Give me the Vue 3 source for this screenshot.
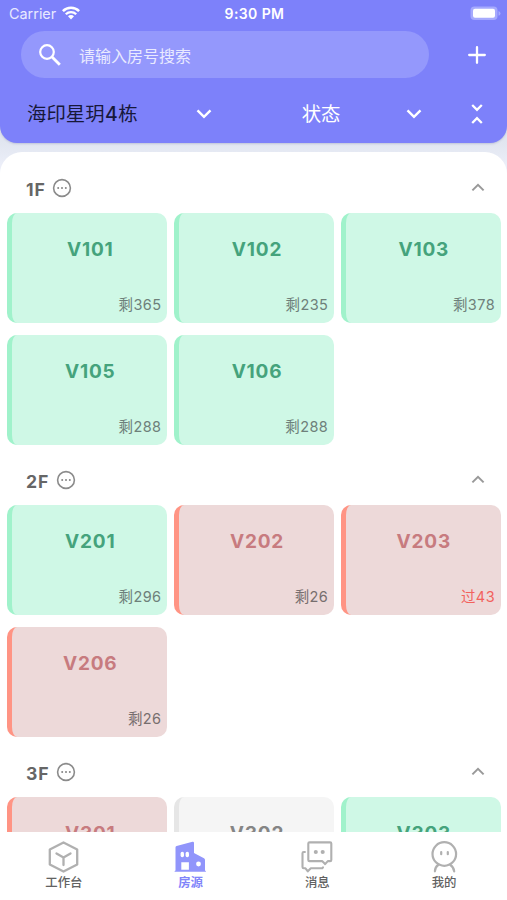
<script setup>
const floors = [
  {
    name: '1F',
    rooms: [
      { no: 'V101', tone: 'green', note: '剩365' },
      { no: 'V102', tone: 'green', note: '剩235' },
      { no: 'V103', tone: 'green', note: '剩378' },
      { no: 'V105', tone: 'green', note: '剩288' },
      { no: 'V106', tone: 'green', note: '剩288' },
    ],
  },
  {
    name: '2F',
    rooms: [
      { no: 'V201', tone: 'green', note: '剩296' },
      { no: 'V202', tone: 'red', note: '剩26' },
      { no: 'V203', tone: 'red', note: '过43', overdue: true },
      { no: 'V206', tone: 'red', note: '剩26' },
    ],
  },
  {
    name: '3F',
    rooms: [
      { no: 'V301', tone: 'red', note: '' },
      { no: 'V302', tone: 'gray', note: '' },
      { no: 'V303', tone: 'green', note: '' },
    ],
  },
]
</script>

<template>
  <div class="screen">
    <header class="top">
      <div class="status">
        <div class="carrier">
          <span>Carrier</span>
          <svg class="wifi" width="18" height="14" viewBox="0 0 18 14" fill="none" stroke="#fff">
            <path d="M.9 5.1a11.6 11.6 0 0 1 16.2 0" stroke-width="2.6" />
            <path d="M3.8 8.2a7.4 7.4 0 0 1 10.4 0" stroke-width="2.3" />
            <path d="M6 10.3a4.2 4.2 0 0 1 6 0L9 13.5z" fill="#fff" stroke="none" />
          </svg>
        </div>
        <div class="time">9:30 PM</div>
        <div class="power">
          <svg width="31" height="15" viewBox="0 0 31 15">
            <rect x=".5" y=".5" width="27" height="13.6" rx="4" fill="#a6aafd" />
            <rect x="3" y="2.8" width="22" height="9" rx="2" fill="#fff" />
            <path d="M28.5 5v4.8q2-.7 2-2.4t-2-2.4z" fill="#a6aafd" />
          </svg>
        </div>
      </div>
      <div class="search-row">
        <div class="search">
          <svg width="22" height="22" viewBox="0 0 22 22" fill="none" stroke="#fff">
            <circle cx="8" cy="8" r="6.8" stroke-width="2.2" />
            <path d="M12.8 12.8l8 8" stroke-width="2.8" />
          </svg>
          <span>请输入房号搜索</span>
        </div>
        <svg class="plus" width="18" height="18" viewBox="0 0 18 18" stroke="#fff" stroke-width="2.3" stroke-linecap="round">
          <path d="M9 1.2v15.6M1.2 9h15.6" />
        </svg>
      </div>
      <div class="filters">
        <span class="building">海印星玥<b>4</b>栋</span>
        <svg width="16" height="10" viewBox="0 0 16 10" fill="none" stroke="#fff" stroke-width="2.4">
          <path d="M1.5 1.3L8 7.8l6.5-6.5" />
        </svg>
        <span class="state">状态</span>
        <svg width="16" height="10" viewBox="0 0 16 10" fill="none" stroke="#fff" stroke-width="2.4">
          <path d="M1.5 1.3L8 7.8l6.5-6.5" />
        </svg>
        <svg class="fold" width="12" height="20" viewBox="0 0 12 20" fill="none" stroke="#fff" stroke-width="2.3">
          <path d="M1.2 1L6 5.8 10.8 1M1.2 19L6 14.2l4.8 4.8" />
        </svg>
      </div>
    </header>

    <main class="panel">
      <section v-for="floor in floors" :key="floor.name">
        <div class="floor-head">
          <span class="floor-name">{{ floor.name }}</span>
          <svg width="20" height="20" viewBox="0 0 20 20" fill="#858585">
            <circle cx="10" cy="10" r="8.4" fill="none" stroke="#8b8b8b" stroke-width="1.6" />
            <circle cx="6.2" cy="10" r="1" />
            <circle cx="10" cy="10" r="1" />
            <circle cx="13.8" cy="10" r="1" />
          </svg>
          <svg class="up" width="14" height="9" viewBox="0 0 14 9" fill="none" stroke="#999" stroke-width="2">
            <path d="M1.4 7.4L7 1.8l5.6 5.6" />
          </svg>
        </div>
        <div class="rooms">
          <div v-for="room in floor.rooms" :key="room.no" class="room" :class="room.tone">
            <span class="no">{{ room.no }}</span>
            <span class="note" :class="{ overdue: room.overdue }">{{ room.note }}</span>
          </div>
        </div>
      </section>
    </main>

    <nav class="tabs">
      <div class="tab">
        <svg width="34" height="34" viewBox="0 0 34 34" fill="none" stroke="#b0b0b0" stroke-width="2.3" stroke-linejoin="round" stroke-linecap="round">
          <path d="M17.5 2.4L31.2 9.6v14.8L17.5 31.6 3.8 24.4V9.6z" />
          <path d="M10.5 13.4l7 4.1 7-4.1M17.5 17.5v7.6" />
        </svg>
        <span>工作台</span>
      </div>
      <div class="tab active">
        <svg width="34" height="34" viewBox="0 0 34 34">
          <path fill="#9195fb" fill-rule="evenodd" d="M2.5 7.5q0-1.2 1.1-1.6L19.5 1.7q1.5-.3 1.5 1.2v10l10 5.4q1 .6 1 1.7v10.5q1 .2 1 1.2H1.5q0-1 1-1.2zM8.3 22.3v7.5h7.6v-7.5z" />
          <rect x="7.6" y="11.8" width="3.4" height="5.4" rx="1.6" fill="#fff" />
          <rect x="12.6" y="11.8" width="3.4" height="5.4" rx="1.6" fill="#fff" />
          <circle cx="25.5" cy="24" r="2.4" fill="#fff" />
        </svg>
        <span>房源</span>
      </div>
      <div class="tab">
        <svg width="34" height="34" viewBox="0 0 34 34" fill="none" stroke="#b0b0b0" stroke-width="2.1" stroke-linejoin="round" stroke-linecap="round">
          <path d="M9.5 2.4h20.6q1.2 0 1.2 1.2v16.3q0 1.2-1.2 1.2h-2.3l-2.7 3-3-3H9.5q-1.2 0-1.2-1.2V3.6q0-1.2 1.2-1.2z" />
          <path d="M4.9 12H3.7q-1.2 0-1.2 1.2v13.9q0 1.2 1.2 1.2h1.8l2.3 3 3-3h11.4l.8-1" />
          <circle cx="15.8" cy="12" r="1" fill="#b0b0b0" />
          <circle cx="22.7" cy="12" r="1" fill="#b0b0b0" />
        </svg>
        <span>消息</span>
      </div>
      <div class="tab">
        <svg width="34" height="34" viewBox="0 0 34 34" fill="none" stroke="#b0b0b0" stroke-width="2.2" stroke-linecap="round">
          <circle cx="17.3" cy="14" r="11.8" />
          <path d="M11.2 25q-3.2 2-3.3 6.3M23.4 25q3.2 2 3.8 6.3" />
          <path d="M14.2 12v2.2M20.8 12v2.2" />
        </svg>
        <span>我的</span>
      </div>
    </nav>
  </div>
</template>

<style>
body {
  margin: 0;
}
</style>

<style scoped>
.screen {
  width: 507px;
  height: 900px;
  overflow: hidden;
  display: flex;
  flex-direction: column;
  background: linear-gradient(#e1e6f0, #e1e6f0 142px, #eef0fa 170px);
  font-family: Inter, "Noto Sans CJK SC", sans-serif;
}
svg {
  display: block;
  flex: none;
}
.top {
  box-sizing: border-box;
  height: 143px;
  flex: none;
  background: #7d81fa;
  border-radius: 0 0 17px 17px;
  box-shadow: 0 1px 2px rgba(90, 100, 150, 0.25);
  color: #fff;
}
.status {
  display: grid;
  grid-template-columns: 1fr auto 1fr;
  align-items: center;
  height: 27px;
  padding: 0 6px 0 9px;
  font-size: 14.4px;
}
.carrier {
  display: flex;
  align-items: center;
  gap: 6px;
  color: #e8e9ff;
}
.wifi {
  margin-top: -1px;
}
.time {
  margin-right: 1px;
  font-weight: 600;
  font-size: 14px;
  letter-spacing: 0.4px;
}
.power {
  display: flex;
  justify-content: flex-end;
}
.search-row {
  display: flex;
  align-items: center;
  padding: 4px 21px 0;
}
.search {
  display: flex;
  align-items: center;
  gap: 18px;
  box-sizing: border-box;
  width: 408px;
  height: 47px;
  padding-left: 18px;
  border-radius: 24px;
  background: #9498fc;
  font-size: 16px;
  color: #e9eaff;
}
.plus {
  margin-left: 39.5px;
}
.filters {
  display: flex;
  align-items: center;
  height: 64px;
  margin-top: 4px;
  padding: 0 24px 0 27px;
  font-size: 19.4px;
}
.building,
.state {
  padding-bottom: 3px;
  white-space: nowrap;
}
.building {
  width: 169px;
  color: #17183a;
}
.building b {
  font-weight: 500;
  padding: 0 0.5px;
}
.state {
  width: 104px;
  margin-left: 90px;
}
.fold {
  margin-left: 49.5px;
}
.panel {
  flex: 1;
  min-height: 0;
  overflow: hidden;
  margin-top: 9px;
  padding-top: 13px;
  border-radius: 22px 22px 0 0;
  background: #fff;
}
.floor-head {
  display: flex;
  align-items: center;
  gap: 6.5px;
  box-sizing: border-box;
  height: 48px;
  padding: 0 22.5px 3px 26px;
}
.floor-name {
  padding-top: 3px;
  font-size: 17.6px;
  font-weight: 650;
  letter-spacing: 0.9px;
  color: #666;
}
.up {
  margin-left: auto;
}
.rooms {
  display: grid;
  grid-template-columns: repeat(3, 1fr);
  gap: 12.5px 6.3px;
  padding: 0 6px 12.5px 7px;
}
.room {
  display: flex;
  flex-direction: column;
  justify-content: space-between;
  box-sizing: border-box;
  height: 109.5px;
  padding: 25px 0 8px;
  border-left: 5px solid;
  border-radius: 10px;
}
.green {
  background: #cff8e6;
  border-color: #a0f2cb;
  color: #45a37c;
}
.red {
  background: #edd9d9;
  border-color: #ff9484;
  color: #c77b7f;
}
.gray {
  background: #f5f5f5;
  border-color: #e6e6e6;
  color: #858585;
}
.no {
  padding-left: 1px;
  font-size: 19px;
  line-height: 24px;
  font-weight: 650;
  letter-spacing: 0.8px;
  text-align: center;
}
.note {
  height: 20px;
  padding-right: 6px;
  font-size: 14.5px;
  line-height: 20px;
  letter-spacing: 0.4px;
  text-align: right;
  color: #6e807a;
}
.red .note {
  color: #776e6e;
}
.red .overdue {
  color: #f2625d;
}
.tabs {
  display: grid;
  grid-template-columns: repeat(4, 1fr);
  flex: none;
  height: 68px;
  background: #fff;
}
.tab {
  display: flex;
  flex-direction: column;
  align-items: center;
  padding-top: 8px;
  font-size: 12.4px;
  line-height: 18px;
  font-weight: 500;
  color: #626262;
}
.tab span {
  padding-left: 1px;
}
.active {
  color: #8185fa;
  font-weight: 700;
}
</style>
